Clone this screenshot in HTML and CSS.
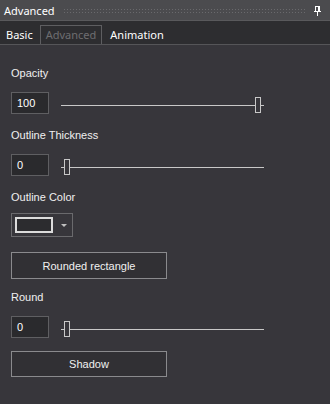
FILE: index.html
```html
<!DOCTYPE html>
<html lang="en">
<head>
    <meta charset="UTF-8">
    <title>Advanced</title>
    <link rel="stylesheet" href="styles.css">
</head>
<body>
    <div class="panel">
        <div class="titlebar">
            <span class="title">Advanced</span>
            <span class="grip"></span>
            <svg class="pin" width="9" height="11" viewBox="0 0 9 11">
                <path d="M2 1h5v1H2zM2 2h1v4H2zM5 2h1v4H5zM6 2h1v4H6zM1 6h7v1H1zM4 7h1v4H4z" fill="#ffffff"/>
            </svg>
        </div>
        <div class="tabs">
            <span class="tab">Basic</span>
            <span class="tab active">Advanced</span>
            <span class="tab">Animation</span>
        </div>
        <div class="content">
            <label class="field-label">Opacity</label>
            <div class="row">
                <div class="num">100</div>
                <div class="slider">
                    <span class="track"></span>
                    <span class="thumb" style="left: 194px;"></span>
                </div>
            </div>

            <label class="field-label">Outline Thickness</label>
            <div class="row">
                <div class="num">0</div>
                <div class="slider">
                    <span class="track"></span>
                    <span class="thumb" style="left: 3px;"></span>
                </div>
            </div>

            <label class="field-label color-label">Outline Color</label>
            <div class="color-pick">
                <span class="swatch"></span>
                <span class="caret"></span>
            </div>

            <button class="btn">Rounded rectangle</button>

            <label class="field-label">Round</label>
            <div class="row">
                <div class="num">0</div>
                <div class="slider">
                    <span class="track"></span>
                    <span class="thumb" style="left: 3px;"></span>
                </div>
            </div>

            <button class="btn">Shadow</button>
        </div>
    </div>
</body>
</html>
```

FILE: styles.css
```css
* {
    box-sizing: border-box;
}

body {
    margin: 0;
    background-color: #37363b;
    font-family: "Liberation Sans", Arial, sans-serif;
    font-size: 11px;
    color: #f0f0f0;
}

.panel {
    width: 330px;
    height: 404px;
    display: flex;
    flex-direction: column;
}

.titlebar {
    flex-shrink: 0;
    height: 21px;
    background-color: #4b4b4e;
    display: flex;
    align-items: center;
    padding: 0 6px 0 4px;
    border-bottom: 1px solid #59595c;
}

.title {
    font-family: "Noto Sans", sans-serif;
    font-size: 11px;
    color: #ffffff;
}

.grip {
    flex: 1;
    height: 5px;
    margin: 0 8px 0 8px;
    background-image: radial-gradient(circle, #69696c 0.7px, transparent 0.9px);
    background-size: 3px 3px;
}

.pin {
    margin-right: 2px;
}

.tabs {
    flex-shrink: 0;
    height: 24px;
    background-color: #2d2d30;
    display: flex;
    align-items: flex-end;
    padding-left: 0;
    border-bottom: 1px solid #555558;
}

.tab {
    font-family: "Noto Sans", sans-serif;
    font-size: 11px;
    color: #ffffff;
    padding: 0 5px;
    height: 19px;
    line-height: 18px;
    border: 1px solid transparent;
    border-bottom: none;
}

.tab.active {
    color: #6e6e71;
    border-color: #5e5e61;
    margin: 0 2px 0 1px;
}

.content {
    flex: 1;
    padding: 21px 0 0 11px;
    display: flex;
    flex-direction: column;
    align-items: flex-start;
}

.field-label {
    height: 14px;
    line-height: 14px;
    margin-bottom: 12px;
}

.color-label {
    margin-bottom: 9px;
}

.row {
    display: flex;
    align-items: flex-start;
    margin-bottom: 13px;
}

.row + .field-label {
    margin-top: 1px;
}

.num {
    width: 38px;
    height: 22px;
    border: 1px solid #5f5f62;
    background-color: #2a2a2d;
    padding: 4px 0 0 5px;
    color: #ffffff;
}

.slider {
    position: relative;
    width: 203px;
    height: 18px;
    margin: 4px 0 0 12px;
}

.track {
    position: absolute;
    left: 0;
    right: 0;
    top: 9px;
    height: 1px;
    background-color: #c8c8c8;
}

.thumb {
    position: absolute;
    top: 1px;
    width: 6px;
    height: 16px;
    border: 1px solid #c8c8c8;
    background-color: #37363b;
}

.color-pick {
    width: 62px;
    height: 24px;
    border: 1px solid #6a6a6d;
    display: flex;
    align-items: center;
    padding-left: 3px;
    margin-bottom: 15px;
}

.swatch {
    width: 38px;
    height: 16px;
    border: 2px solid #dcdcdc;
    background-color: #2c2c2f;
}

.caret {
    margin-left: 8px;
    width: 0;
    height: 0;
    border-left: 3px solid transparent;
    border-right: 3px solid transparent;
    border-top: 3px solid #c0c0c0;
}

.btn {
    width: 156px;
    height: 27px;
    background-color: #313034;
    border: 1px solid #8a8a8d;
    color: #f0f0f0;
    font-family: "Liberation Sans", Arial, sans-serif;
    font-size: 11px;
    padding: 0;
    margin-bottom: 11px;
}

.row + .btn {
    height: 26px;
}
```
